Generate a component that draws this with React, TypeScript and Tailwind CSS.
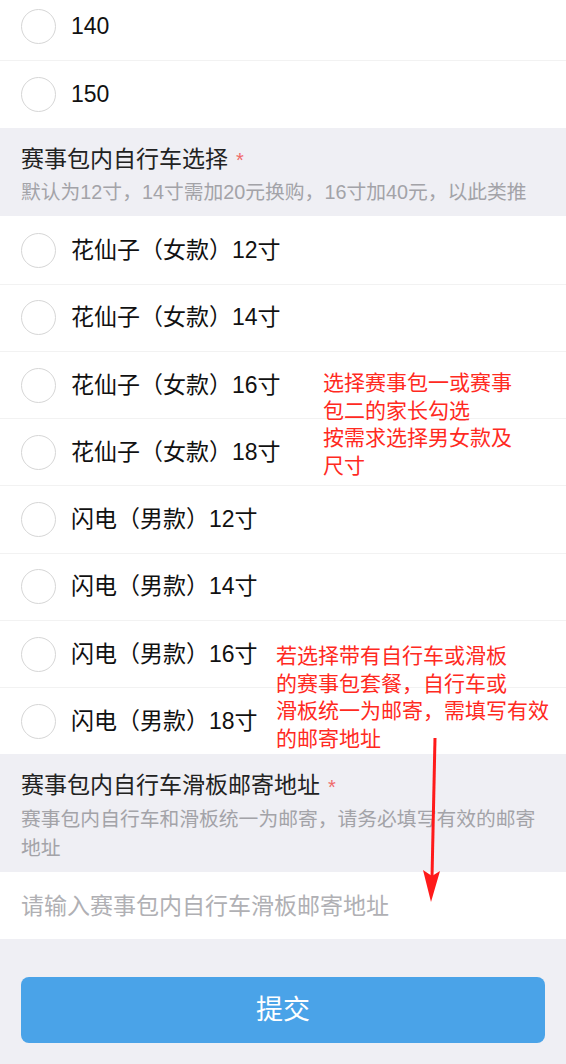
import React from "react";

const font = { fontFamily: '"Liberation Sans", "Noto Sans CJK SC", sans-serif' };

function Radio({ label, first }: { label: string; first?: boolean }) {
  return (
    <div
      className={
        "flex h-[67.25px] items-center bg-white pl-[21px] " +
        (first ? "" : "border-t border-[#f2f2f2]")
      }
    >
      <span className="h-[35px] w-[35px] shrink-0 rounded-full border-[1.5px] border-[#d6d6d6]" />
      <span className="ml-[15px] text-[23px] leading-none text-[#111]">{label}</span>
    </div>
  );
}

function Section({ title, desc }: { title: string; desc: string }) {
  return (
    <div className="bg-[#efeff4] px-[21px] pb-[9px] pt-[16px]">
      <div className="text-[23px] leading-[30px] text-[#222]">
        {title}
        <span className="ml-[8px] align-middle text-[20px] text-[#f06a6a]">*</span>
      </div>
      <div className="mt-[3px] text-[19.8px] leading-[29px] text-[#a3a3a8]">{desc}</div>
    </div>
  );
}

export default function App() {
  const bikes = [
    "花仙子（女款）12寸",
    "花仙子（女款）14寸",
    "花仙子（女款）16寸",
    "花仙子（女款）18寸",
    "闪电（男款）12寸",
    "闪电（男款）14寸",
    "闪电（男款）16寸",
    "闪电（男款）18寸",
  ];
  return (
    <div className="relative h-[1064px] w-[566px] overflow-hidden bg-[#efeff4]" style={font}>
      <div className="-mt-[7px]">
        <Radio label="140" first />
        <Radio label="150" />
      </div>
      <Section title="赛事包内自行车选择" desc="默认为12寸，14寸需加20元换购，16寸加40元，以此类推" />
      {bikes.map((b, i) => (
        <Radio key={b} label={b} first={i === 0} />
      ))}
      <Section
        title="赛事包内自行车滑板邮寄地址"
        desc="赛事包内自行车和滑板统一为邮寄，请务必填写有效的邮寄地址"
      />
      <div className="flex h-[67px] items-center bg-white px-[21px]">
        <span className="text-[23px] text-[#b0b0b4]">请输入赛事包内自行车滑板邮寄地址</span>
      </div>
      <div className="px-[21px] pt-[38px]">
        <button className="flex h-[66px] w-full items-center justify-center rounded-[8px] bg-[#4aa3e8] text-[27px] text-white">
          提交
        </button>
      </div>

      <div className="absolute left-[323px] top-[369px] text-[21px] leading-[27.7px] text-[#ff2a1f]">
        <div>选择赛事包一或赛事</div>
        <div>包二的家长勾选</div>
        <div>按需求选择男女款及</div>
        <div>尺寸</div>
      </div>
      <div className="absolute left-[276px] top-[642px] text-[21px] leading-[27.7px] text-[#ff2a1f]">
        <div>若选择带有自行车或滑板</div>
        <div>的赛事包套餐，自行车或</div>
        <div>滑板统一为邮寄，需填写有效</div>
        <div>的邮寄地址</div>
      </div>
      <svg className="absolute left-[418px] top-[738px]" width="26" height="166" viewBox="0 0 26 166">
        <path d="M17 0 L14 140" stroke="#ff1a1a" strokeWidth="3" />
        <path d="M5 132 L13 164 L22 133 L14 138 Z" fill="#ff1a1a" />
      </svg>
    </div>
  );
}
